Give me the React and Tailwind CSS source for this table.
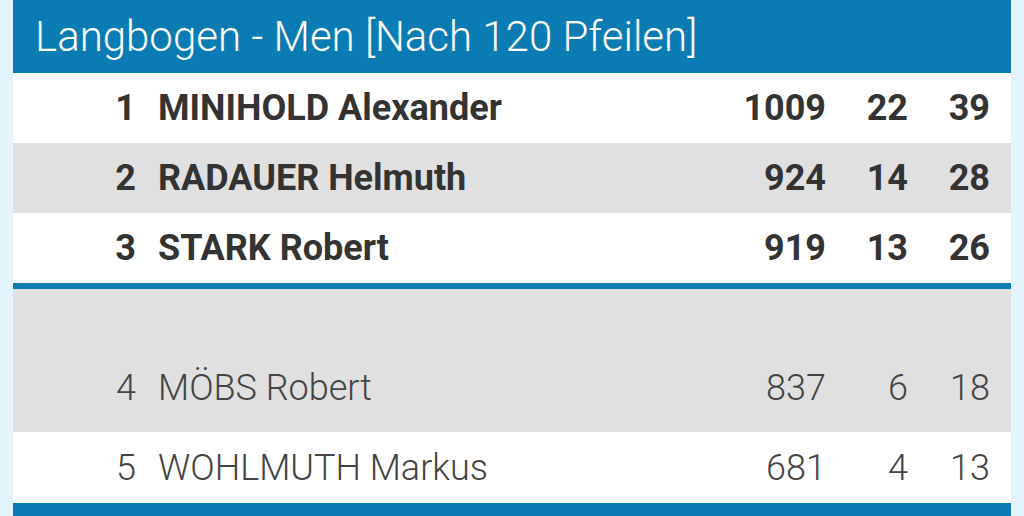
const top = [
  { rank: 1, name: 'MINIHOLD Alexander', score: 1009, x: 22, ten: 39 },
  { rank: 2, name: 'RADAUER Helmuth', score: 924, x: 14, ten: 28 },
  { rank: 3, name: 'STARK Robert', score: 919, x: 13, ten: 26 },
]

function Row({ r, bold, className }) {
  return (
    <div className={`flex items-center ${bold ? 'font-bold text-[#333]' : 'font-light text-[#444]'} text-[36px] ${className}`}>
      <div className="w-[123px] text-right">{r.rank}</div>
      <div className="flex-1 pl-[22px]">{r.name}</div>
      <div className="w-[100px] text-right">{r.score}</div>
      <div className="w-[82px] text-right">{r.x}</div>
      <div className="w-[82px] text-right">{r.ten}</div>
      <div className="w-[21px]" />
    </div>
  )
}

export default function App() {
  return (
    <div className="h-[516px] overflow-hidden bg-[#e4f4fc] px-[13px]" style={{ fontFamily: 'Roboto, sans-serif' }}>
      <div className="flex flex-col">
        <div className="h-[73px] bg-[#0a7cb3] pl-[22px] flex items-center text-white text-[42px] font-light">
          Langbogen - Men [Nach 120 Pfeilen]
        </div>
        {top.map((r, i) => (
          <Row key={r.rank} r={r} bold className={`h-[70px] ${i % 2 ? 'bg-[#e0e0e0]' : 'bg-white'}`} />
        ))}
        <div className="h-[6px] bg-[#0a7cb3]" />
        <Row r={{ rank: 4, name: 'MÖBS Robert', score: 837, x: 6, ten: 18 }} className="h-[143px] bg-[#e0e0e0] items-end pb-[17px]" />
        <Row r={{ rank: 5, name: 'WOHLMUTH Markus', score: 681, x: 4, ten: 13 }} className="h-[71px] bg-white" />
        <div className="h-[13px] bg-[#0a7cb3]" />
      </div>
    </div>
  )
}
